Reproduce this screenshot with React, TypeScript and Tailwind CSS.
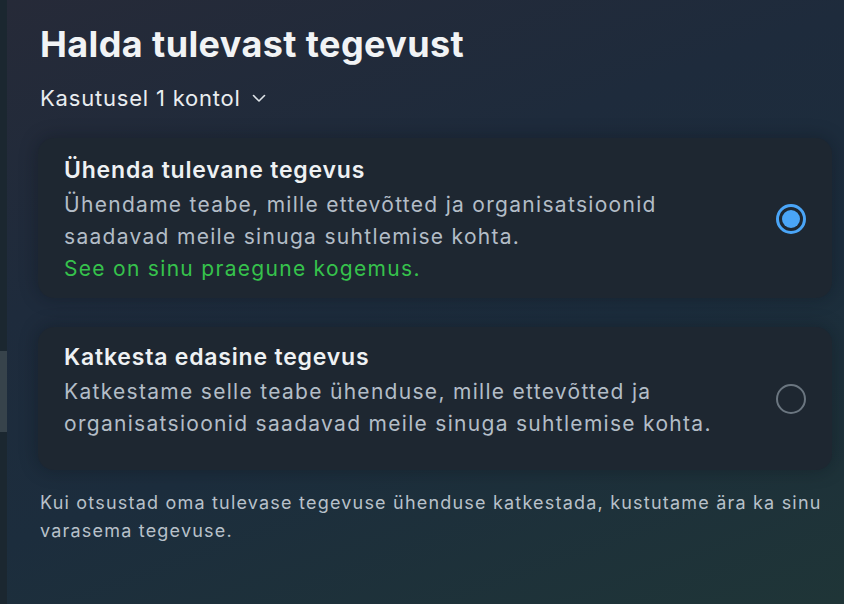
import React from "react";

function Radio({ checked }: { checked: boolean }) {
  if (checked) {
    return (
      <div className="w-[30px] h-[30px] rounded-full border-[3px] border-[#4aa5f7] flex items-center justify-center shrink-0">
        <div className="w-[18px] h-[18px] rounded-full bg-[#4aa5f7]" />
      </div>
    );
  }
  return <div className="w-[30px] h-[30px] rounded-full border-2 border-[#6b7680] shrink-0" />;
}

export default function App() {
  return (
    <div
      className="w-[844px] h-[604px] flex overflow-hidden"
      style={{ fontFamily: "Inter, 'Noto Sans', sans-serif" }}
    >
      <div className="w-[7px] h-full bg-[#1b2730] flex flex-col pt-[351px]">
        <div className="h-[81px] bg-[#37434b]" />
      </div>
      <div className="flex-1 h-full bg-[linear-gradient(160deg,#262a38_0%,#1e2b3c_35%,#1c2d3d_60%,#1f3537_100%)] pl-[31px] pr-[12px] pt-[24px]">
        <h1 className="pl-[2px] text-[36px] leading-[40px] font-bold text-[#f1f3f5] tracking-[0.4px]">
          Halda tulevast tegevust
        </h1>
        <div className="pl-[2px] mt-[20px] flex items-center gap-[11px] text-[22px] leading-[28px] text-[#e9edf0] tracking-[0.8px]">
          <span>Kasutusel 1 kontol</span>
          <svg width="14" height="9" viewBox="0 0 14 9" fill="none">
            <path d="M1.5 1.5 L7 7 L12.5 1.5" stroke="#dfe4e8" strokeWidth="1.6" strokeLinecap="round" strokeLinejoin="round" />
          </svg>
        </div>

        <div className="mt-[26px] rounded-[16px] bg-[#1e2731] shadow-[0_0_18px_rgba(10,14,20,0.35)] pl-[26px] pr-[26px] pt-[14px] pb-[13px] flex items-center gap-[20px]">
          <div className="flex-1">
            <div className="text-[23px] leading-[36px] font-semibold text-[#eef1f3] tracking-[0.8px]">Ühenda tulevane tegevus</div>
            <div className="mt-[1px] text-[21px] leading-[32px] text-[#b3bdc7] tracking-[1.3px]">
              Ühendame teabe, mille ettevõtted ja organisatsioonid
              <br />
              saadavad meile sinuga suhtlemise kohta.
            </div>
            <div className="text-[21px] leading-[32px] text-[#36c24c] tracking-[1.3px]">See on sinu praegune kogemus.</div>
          </div>
          <Radio checked />
        </div>

        <div className="mt-[29px] rounded-[16px] bg-[#1e2731] shadow-[0_0_18px_rgba(10,14,20,0.35)] pl-[26px] pr-[26px] pt-[12px] pb-[12px] flex items-center gap-[20px]">
          <div className="flex-1 pb-[18px]">
            <div className="text-[23px] leading-[36px] font-semibold text-[#eef1f3] tracking-[0.8px]">Katkesta edasine tegevus</div>
            <div className="mt-[1px] text-[21px] leading-[32px] text-[#b3bdc7] tracking-[1.3px]">
              Katkestame selle teabe ühenduse, mille ettevõtted ja
              <br />
              organisatsioonid saadavad meile sinuga suhtlemise kohta.
            </div>
          </div>
          <Radio checked={false} />
        </div>

        <div className="pl-[2px] mt-[19px] text-[18px] leading-[28px] text-[#b8c1ca] tracking-[1.2px]">
          Kui otsustad oma tulevase tegevuse ühenduse katkestada, kustutame ära ka sinu varasema tegevuse.
        </div>
      </div>
    </div>
  );
}
